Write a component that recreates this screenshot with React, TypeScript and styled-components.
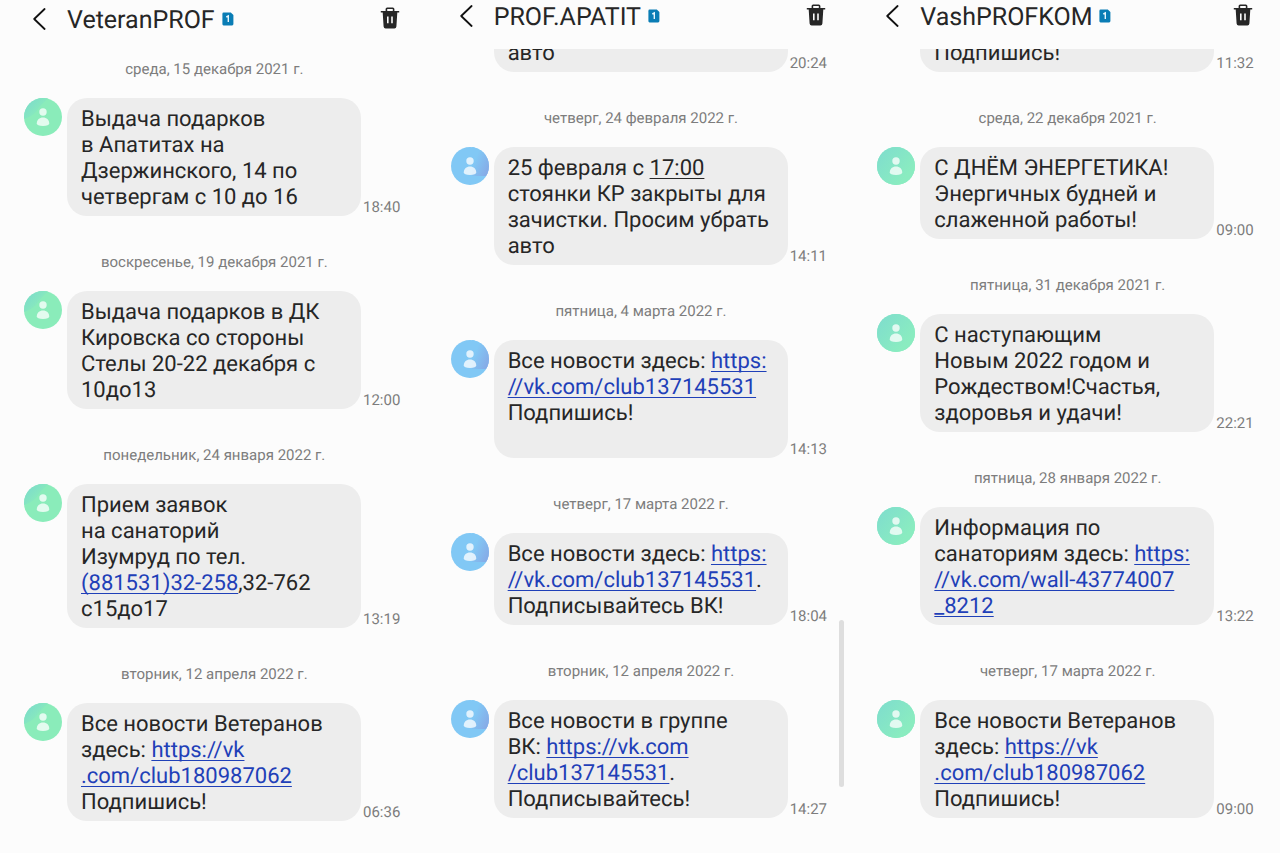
import React from "react";
import styled, { createGlobalStyle } from "styled-components";

const GlobalStyle = createGlobalStyle`
  * { box-sizing: border-box; }
  body {
    margin: 0;
    background: #fcfcfc;
    color: #262626;
    font-family: Roboto, "Noto Sans", sans-serif;
    text-rendering: geometricPrecision;
  }
`;

type Tone = "mint" | "sky" | "teal";

const Screens = styled.main`
  display: grid;
  grid-template-columns: repeat(3, minmax(0, 1fr));
  height: 100vh;
  overflow: hidden;
`;

const Conversation = styled.section<{ $low?: boolean }>`
  display: flex;
  flex-direction: column;
  min-height: 0;
  padding-top: ${(p) => (p.$low ? 3 : 0)}px;
  padding-bottom: ${(p) => (p.$low ? 32 : 35)}px;
  position: relative;
`;

const Header = styled.header`
  display: flex;
  align-items: center;
  flex: none;
  height: 32px;
  margin-bottom: 17px;
  padding: 0 27px 0 24px;
`;

const IconButton = styled.button`
  display: flex;
  align-items: center;
  padding: 0;
  border: 0;
  background: none;
  color: #1c1c1c;
  cursor: pointer;
`;

const BackButton = styled(IconButton)`
  width: 43px;
  padding: 0 0 0 9px;
`;

const DeleteButton = styled(IconButton)`
  margin-left: auto;
  padding-bottom: 2px;
`;

const Title = styled.h1`
  margin: 0 7px 0 0;
  padding-top: 4px;
  font-size: 25px;
  line-height: 32px;
  font-weight: 400;
`;

const MessageList = styled.div`
  flex: 1;
  min-height: 0;
  display: flex;
  flex-direction: column;
  justify-content: flex-end;
  overflow: hidden;
`;

const DateLine = styled.div`
  flex: none;
  margin: 36px 0 19px;
  padding-left: 2px;
  color: #7d7d7d;
  font-size: 15px;
  line-height: 20px;
  text-align: center;
`;

const MessageRow = styled.article`
  display: flex;
  align-items: flex-start;
  flex: none;
  padding-left: 24px;
`;

const AvatarIcon = styled.svg`
  flex: none;
  margin-right: 5px;
`;

const Bubble = styled.p<{ $tall?: boolean }>`
  display: flex;
  flex-direction: column;
  justify-content: flex-end;
  width: 294px;
  min-height: ${(p) => (p.$tall ? 118 : 0)}px;
  margin: 0;
  padding: 9px 14px 5px;
  border-radius: 20px;
  background: #ededed;
  font-size: 22px;
  line-height: 26px;
`;

const Line = styled.span`
  display: block;
  min-height: 26px;
  white-space: nowrap;
`;

const Link = styled.a<{ $plain?: boolean }>`
  color: ${(p) => (p.$plain ? "inherit" : "#1f40b8")};
  text-decoration: underline;
  text-decoration-thickness: 1px;
  text-underline-offset: 3px;
  text-decoration-skip-ink: none;
`;

const Time = styled.time`
  align-self: flex-end;
  margin-left: 2px;
  color: #7d7d7d;
  font-size: 15px;
  line-height: 18px;
`;

const ScrollThumb = styled.div`
  position: absolute;
  right: 9px;
  bottom: 66px;
  width: 5px;
  height: 167px;
  border-radius: 3px;
  background: #dedede;
`;

const BackIcon = () => (
  <svg width="13" height="22" viewBox="0 0 13 22" fill="none" aria-hidden="true">
    <path d="M11.6 1 1.2 11l10.4 10" stroke="#111" strokeWidth="1.8" strokeLinecap="round" strokeLinejoin="round" />
  </svg>
);

const TrashIcon = () => (
  <svg width="20" height="22" viewBox="0 0 20 22" aria-hidden="true">
    <path d="M6.4 4.2V2.1q0-.8.8-.8h5.6q.8 0 .8.8v2.1" fill="none" stroke="#262626" strokeWidth="1.6" />
    <path
      fillRule="evenodd"
      fill="#262626"
      d="M.8 3.9h18.4v1.7h-1.9l-.9 14q-.2 1.9-2 1.9H5.6q-1.8 0-2-1.9l-.9-14H.8zM7 9.6v6.6h1.6V9.6zm4.2 0v6.6h1.6V9.6z"
    />
  </svg>
);

const SimIcon = () => (
  <svg width="12" height="14" viewBox="0 0 12 14" role="img" aria-label="SIM 1">
    <path d="M1.6.6h7.2l2.6 2.5v9q0 1.3-1.3 1.3H1.6Q.4 13.4.4 12.1V1.9Q.4.6 1.6.6z" fill="#0a7db5" />
    <path d="M4.3 5 6.3 4v6" fill="none" stroke="#e8f6fd" strokeWidth="1.4" />
  </svg>
);

const tones: Record<Tone, { base: string; shade: string; from: [number, number]; to: [number, number] }> = {
  mint: { base: "#8aecba", shade: "#7ddccb", from: [5, 2], to: [18, 14] },
  sky: { base: "#81c8f5", shade: "#86a9e6", from: [38, 24], to: [22, 17] },
  teal: { base: "#8aecc0", shade: "#80dfcc", from: [4, 6], to: [30, 28] },
};

const Avatar = ({ tone, id }: { tone: Tone; id: string }) => {
  const t = tones[tone];
  return (
    <AvatarIcon width="38" height="38" viewBox="0 0 38 38" aria-hidden="true">
      <defs>
        <linearGradient id={id} gradientUnits="userSpaceOnUse" x1={t.from[0]} y1={t.from[1]} x2={t.to[0]} y2={t.to[1]}>
          <stop offset="0" stopColor={t.shade} />
          <stop offset="1" stopColor={t.base} />
        </linearGradient>
        <clipPath id={`${id}-clip`}>
          <circle cx="19" cy="19" r="19" />
        </clipPath>
      </defs>
      <g clipPath={`url(#${id}-clip)`}>
        <rect width="38" height="38" fill={t.base} />
        {tone === "mint" && <path d="M0 0h25Q17 6 12 14 7 19 0 21z" fill={`url(#${id})`} />}
        {tone === "sky" && <path d="M21 0h17v29H21z" fill={`url(#${id})`} />}
        {tone === "teal" && <rect width="38" height="38" fill={`url(#${id})`} />}
      </g>
      <g fill="#fff" fillOpacity=".76">
        <circle cx="19" cy="14" r="3.7" />
        <path d="M12.8 25.2c0-3.2 2.6-5.6 6.2-5.6s6.2 2.4 6.2 5.6c0 1.8-2.2 2.7-6.2 2.7s-6.2-.9-6.2-2.7z" />
      </g>
    </AvatarIcon>
  );
};

interface Message {
  date?: string;
  time: string;
  lines: React.ReactNode[];
  tall?: boolean;
}

interface Chat {
  name: string;
  tone: Tone;
  low?: boolean;
  scroll?: boolean;
  messages: Message[];
}

const club = "https://vk.com/club137145531";
const veterans = "https://vk.com/club180987062";
const wall = "https://vk.com/wall-43774007_8212";

const chats: Chat[] = [
  {
    name: "VeteranPROF",
    tone: "mint",
    low: true,
    messages: [
      {
        date: "среда, 15 декабря 2021 г.",
        time: "18:40",
        lines: ["Выдача подарков", "в Апатитах на", "Дзержинского, 14 по", "четвергам с 10 до 16"],
      },
      {
        date: "воскресенье, 19 декабря 2021 г.",
        time: "12:00",
        lines: ["Выдача подарков в ДК", "Кировска со стороны", "Стелы 20-22 декабря с", "10до13"],
      },
      {
        date: "понедельник, 24 января 2022 г.",
        time: "13:19",
        lines: [
          "Прием заявок",
          "на санаторий",
          "Изумруд по тел.",
          <><Link href="tel:88153132258">(881531)32-258</Link>,32-762</>,
          "с15до17",
        ],
      },
      {
        date: "вторник, 12 апреля 2022 г.",
        time: "06:36",
        lines: [
          "Все новости Ветеранов",
          <>здесь: <Link href={veterans}>https://vk</Link></>,
          <Link href={veterans}>.com/club180987062</Link>,
          "Подпишись!",
        ],
      },
    ],
  },
  {
    name: "PROF.APATIT",
    tone: "sky",
    scroll: true,
    messages: [
      { time: "20:24", tall: true, lines: ["авто"] },
      {
        date: "четверг, 24 февраля 2022 г.",
        time: "14:11",
        lines: [
          <>25 февраля с <Link $plain href="#time">17:00</Link></>,
          "стоянки КР закрыты для",
          "зачистки. Просим убрать",
          "авто",
        ],
      },
      {
        date: "пятница, 4 марта 2022 г.",
        time: "14:13",
        lines: [
          <>Все новости здесь: <Link href={club}>https:</Link></>,
          <Link href={club}>//vk.com/club137145531</Link>,
          "Подпишись!",
          "",
        ],
      },
      {
        date: "четверг, 17 марта 2022 г.",
        time: "18:04",
        lines: [
          <>Все новости здесь: <Link href={club}>https:</Link></>,
          <><Link href={club}>//vk.com/club137145531</Link>.</>,
          "Подписывайтесь ВК!",
        ],
      },
      {
        date: "вторник, 12 апреля 2022 г.",
        time: "14:27",
        lines: [
          "Все новости в группе",
          <>ВК: <Link href={club}>https://vk.com</Link></>,
          <><Link href={club}>/club137145531</Link>.</>,
          "Подписывайтесь!",
        ],
      },
    ],
  },
  {
    name: "VashPROFKOM",
    tone: "teal",
    messages: [
      { time: "11:32", tall: true, lines: ["Подпишись!"] },
      {
        date: "среда, 22 декабря 2021 г.",
        time: "09:00",
        lines: ["С ДНЁМ ЭНЕРГЕТИКА!", "Энергичных будней и", "слаженной работы!"],
      },
      {
        date: "пятница, 31 декабря 2021 г.",
        time: "22:21",
        lines: ["С наступающим", "Новым 2022 годом и", "Рождеством!Счастья,", "здоровья и удачи!"],
      },
      {
        date: "пятница, 28 января 2022 г.",
        time: "13:22",
        lines: [
          "Информация по",
          <>санаториям здесь: <Link href={wall}>https:</Link></>,
          <Link href={wall}>//vk.com/wall-43774007</Link>,
          <Link href={wall}>_8212</Link>,
        ],
      },
      {
        date: "четверг, 17 марта 2022 г.",
        time: "09:00",
        lines: [
          "Все новости Ветеранов",
          <>здесь: <Link href={veterans}>https://vk</Link></>,
          <Link href={veterans}>.com/club180987062</Link>,
          "Подпишись!",
        ],
      },
    ],
  },
];

export default function App() {
  return (
    <>
      <GlobalStyle />
      <Screens>
        {chats.map((chat) => (
          <Conversation key={chat.name} $low={chat.low}>
            <Header>
              <BackButton type="button" aria-label="Назад">
                <BackIcon />
              </BackButton>
              <Title>{chat.name}</Title>
              <SimIcon />
              <DeleteButton type="button" aria-label="Удалить">
                <TrashIcon />
              </DeleteButton>
            </Header>
            <MessageList>
              {chat.messages.map((m, i) => (
                <React.Fragment key={i}>
                  {m.date && <DateLine>{m.date}</DateLine>}
                  <MessageRow>
                    <Avatar tone={chat.tone} id={`${chat.tone}-${i}`} />
                    <Bubble $tall={m.tall}>
                      {m.lines.map((line, n) => (
                        <Line key={n}>{line}</Line>
                      ))}
                    </Bubble>
                    <Time>{m.time}</Time>
                  </MessageRow>
                </React.Fragment>
              ))}
            </MessageList>
            {chat.scroll && <ScrollThumb />}
          </Conversation>
        ))}
      </Screens>
    </>
  );
}
